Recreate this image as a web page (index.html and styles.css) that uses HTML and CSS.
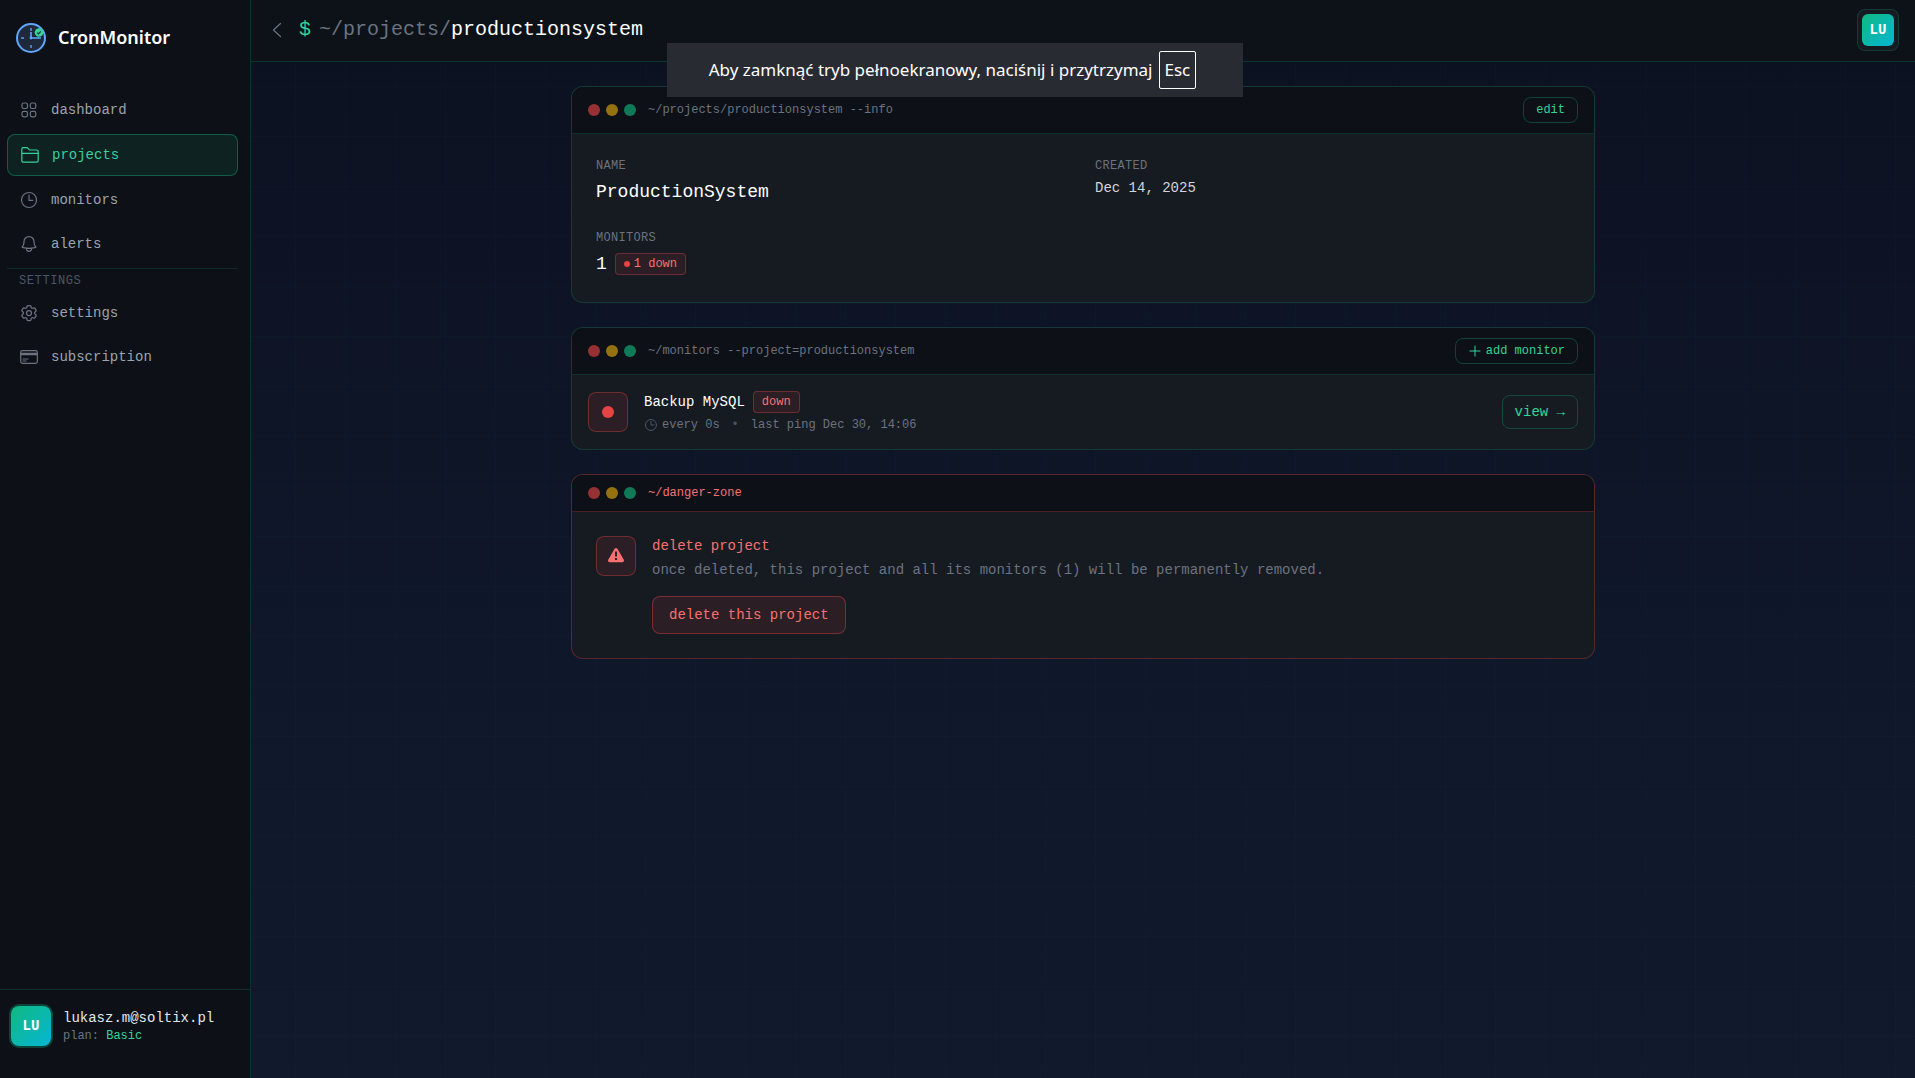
FILE: index.html
```html
<!DOCTYPE html>
<html lang="en">
<head>
<meta charset="utf-8">
<meta name="viewport" content="width=device-width, initial-scale=1">
<title>productionsystem - CronMonitor</title>
<link rel="stylesheet" href="styles.css">
</head>
<body>
<div class="app">
  <aside class="sidebar">
    <a class="brand" href="#">
      <svg class="brand-logo" viewBox="0 0 30 30" aria-hidden="true">
        <circle cx="15" cy="15" r="14" fill="#1e293b" stroke="#60a5fa" stroke-width="2"/>
        <path d="M15 5v3M15 22v3M5 15h3M22 15h3" stroke="#4b7fc4" stroke-width="2"/>
        <path d="M15 9v6h8" fill="none" stroke="#60a5fa" stroke-width="1.6"/>
        <circle cx="15" cy="15" r="1.4" fill="#60a5fa"/>
        <circle cx="23" cy="9.500" r="4.300" fill="#34d399"/>
        <path d="M21.300 9.700l1.200 1.200 2.300-2.600" fill="none" stroke="#1e293b" stroke-width="1.1"/>
      </svg>
      <span>CronMonitor</span>
    </a>
    <nav class="nav">
      <a class="nav-item" href="#">
        <svg class="icon" viewBox="0 0 20 20" aria-hidden="true"><rect x="3" y="3" width="5.500" height="5.500" rx="1.700"/><rect x="11.300" y="3" width="5.500" height="5.500" rx="1.700"/><rect x="3" y="11.300" width="5.500" height="5.500" rx="1.700"/><rect x="11.300" y="11.300" width="5.500" height="5.500" rx="1.700"/></svg>
        dashboard
      </a>
      <a class="nav-item active" href="#" aria-current="page">
        <svg class="icon" viewBox="0 0 20 20" aria-hidden="true"><path d="M1.800 7.800V4.200c0-.900.600-1.500 1.500-1.500h3.300c.600 0 1 .2 1.400.6l1.100 1.300c.3.300.6.400 1 .4h6.500c.900 0 1.600.7 1.600 1.600v9c0 .900-.7 1.600-1.600 1.600H3.400c-.9 0-1.600-.7-1.600-1.600zM1.900 8.300h16.200"/></svg>
        projects
      </a>
      <a class="nav-item" href="#">
        <svg class="icon" viewBox="0 0 20 20" aria-hidden="true"><circle cx="10" cy="10" r="7.500"/><path d="M10 5v5.300h3.800"/></svg>
        monitors
      </a>
      <a class="nav-item" href="#">
        <svg class="icon" viewBox="0 0 24 24" aria-hidden="true"><path d="M14.857 17.082a23.848 23.848 0 0 0 5.454-1.310A8.967 8.967 0 0 1 18 9.750V9A6 6 0 0 0 6 9v.750a8.967 8.967 0 0 1-2.312 6.022c1.733.640 3.560 1.085 5.455 1.310m5.714 0a24.255 24.255 0 0 1-5.714 0m5.714 0a3 3 0 1 1-5.714 0"/></svg>
        alerts
      </a>
      <h2 class="nav-heading">SETTINGS</h2>
      <a class="nav-item" href="#">
        <svg class="icon" viewBox="0 0 24 24" aria-hidden="true"><path d="M9.594 3.940c.090-.542.560-.940 1.110-.940h2.593c.550 0 1.020.398 1.110.940l.213 1.281c.063.374.313.686.645.870.074.040.147.083.220.127.325.196.720.257 1.075.124l1.217-.456a1.125 1.125 0 0 1 1.370.490l1.296 2.247a1.125 1.125 0 0 1-.260 1.431l-1.003.827c-.293.241-.438.613-.430.992a7.723 7.723 0 0 1 0 .255c-.008.378.137.750.430.991l1.004.827c.424.350.534.955.260 1.430l-1.298 2.247a1.125 1.125 0 0 1-1.369.491l-1.217-.456c-.355-.133-.750-.072-1.076.124a6.470 6.470 0 0 1-.220.128c-.331.183-.581.495-.644.869l-.213 1.281c-.090.543-.560.940-1.110.940h-2.594c-.550 0-1.019-.398-1.110-.940l-.213-1.281c-.062-.374-.312-.686-.644-.870a6.520 6.520 0 0 1-.220-.127c-.325-.196-.720-.257-1.076-.124l-1.217.456a1.125 1.125 0 0 1-1.369-.490l-1.297-2.247a1.125 1.125 0 0 1 .260-1.431l1.004-.827c.292-.240.437-.613.430-.991a6.932 6.932 0 0 1 0-.255c.007-.380-.138-.751-.430-.992l-1.004-.827a1.125 1.125 0 0 1-.260-1.430l1.297-2.247a1.125 1.125 0 0 1 1.370-.491l1.216.456c.356.133.751.072 1.076-.124.072-.044.146-.086.220-.128.332-.183.582-.495.644-.869z"/><circle cx="12" cy="12" r="3"/></svg>
        settings
      </a>
      <a class="nav-item" href="#">
        <svg class="icon" viewBox="0 0 20 20" aria-hidden="true"><rect x="1.700" y="3.700" width="16.600" height="12.600" rx="1.700"/><path d="M1.700 6.300h16.600M1.700 7.700h16.600M4 12h5M4 14h3"/></svg>
        subscription
      </a>
    </nav>
    <div class="account">
      <span class="avatar avatar-ring">LU</span>
      <div>
        <p class="account-email">lukasz.m@soltix.pl</p>
        <p class="account-plan">plan: <span>Basic</span></p>
      </div>
    </div>
  </aside>

  <div class="page">
    <header class="topbar">
      <a class="back" href="#" aria-label="Back to projects">
        <svg class="icon" viewBox="0 0 20 20" aria-hidden="true"><path d="M13.500 3.500L6.500 10l7 6.500"/></svg>
      </a>
      <h1 class="path"><span class="prompt">$</span><span class="crumbs">~/projects/<b>productionsystem</b></span></h1>
      <button class="user-menu" type="button"><span class="avatar avatar-small">LU</span></button>
    </header>

    <main class="content">
      <section class="card">
        <header class="card-head">
          <span class="lights"><i></i><i></i><i></i></span>
          <h2 class="card-title">~/projects/productionsystem --info</h2>
          <button class="btn btn-small" type="button">edit</button>
        </header>
        <dl class="info">
          <div><dt>NAME</dt><dd class="large">ProductionSystem</dd></div>
          <div><dt>CREATED</dt><dd>Dec 14, 2025</dd></div>
          <div><dt>MONITORS</dt><dd class="large count">1 <span class="badge"><i class="dot"></i>1 down</span></dd></div>
        </dl>
      </section>

      <section class="card">
        <header class="card-head">
          <span class="lights"><i></i><i></i><i></i></span>
          <h2 class="card-title">~/monitors --project=productionsystem</h2>
          <button class="btn btn-small" type="button"><svg class="icon icon-small" viewBox="0 0 14 14" aria-hidden="true"><path d="M7 2v10M2 7h10"/></svg>add monitor</button>
        </header>
        <div class="monitor">
          <span class="tile"><i class="dot dot-large"></i></span>
          <div class="monitor-text">
            <h3 class="monitor-name">Backup MySQL <span class="badge">down</span></h3>
            <p class="monitor-meta">
              <span class="every"><svg class="icon icon-small" viewBox="0 0 14 14" aria-hidden="true"><circle cx="7" cy="7" r="5.500"/><path d="M7 3.500V7h3"/></svg>every 0s</span>
              <span class="separator">•</span>
              <span>last ping Dec 30, 14:06</span>
            </p>
          </div>
          <a class="btn" href="#">view →</a>
        </div>
      </section>

      <section class="card card-danger">
        <header class="card-head">
          <span class="lights"><i></i><i></i><i></i></span>
          <h2 class="card-title">~/danger-zone</h2>
        </header>
        <div class="danger">
          <span class="tile">
            <svg class="warning" viewBox="0 0 20 20" aria-hidden="true"><path fill="#f87171" d="M8.600 2.700c.6-1.100 2.200-1.100 2.800 0l6.400 11.100c.6 1.100-.2 2.400-1.400 2.400H3.600c-1.200 0-2-1.300-1.400-2.400z"/><path fill="#2d1f26" d="M9 5.500h2v5H9zM9 12h2v2H9z"/></svg>
          </span>
          <div>
            <h3 class="danger-title">delete project</h3>
            <p class="danger-text">once deleted, this project and all its monitors (1) will be permanently removed.</p>
            <button class="btn btn-danger" type="button">delete this project</button>
          </div>
        </div>
      </section>
    </main>
  </div>
</div>
<div class="toast" role="status">Aby zamknąć tryb pełnoekranowy, naciśnij i przytrzymaj <kbd>Esc</kbd></div>
</body>
</html>
```
FILE: styles.css
```css
:root {
  --line: rgba(16, 185, 129, .2);
  --green: #34d399;
  --red: #f87171;
  --ink: #0d1117;
  --panel: #161b22;
  --muted: #6b7280;
}

* { box-sizing: border-box; }
h1, h2, h3, p, dl, dd { margin: 0; font-weight: 400; }
h3 { font-size: 14px; }
a { color: inherit; text-decoration: none; }

body {
  margin: 0;
  color: #fff;
  background: #0f172a;
  font: 14px/20px "Liberation Mono", monospace;
}
button { font: inherit; color: inherit; cursor: pointer; }

.app { display: flex; min-height: 100vh; }

.icon {
  width: 20px;
  height: 20px;
  flex: none;
  fill: none;
  stroke: currentColor;
  stroke-width: 1.2;
  stroke-linecap: round;
  stroke-linejoin: round;
}
.icon-small { width: 14px; height: 14px; stroke-width: 1; }

/* Sidebar */
.sidebar {
  display: flex;
  flex-direction: column;
  flex: 0 0 251px;
  background: var(--ink);
  border-right: 1px solid var(--line);
}
.brand {
  display: flex;
  align-items: center;
  gap: 12px;
  padding: 23px 16px 0;
  font: 600 18px/28px "Noto Sans", sans-serif;
}
.brand span { padding-bottom: 2px; }
.brand-logo { width: 30px; height: 30px; }
.nav {
  display: flex;
  flex-direction: column;
  flex: 1;
  gap: 4px;
  padding: 37px 12px 0 7px;
}
.nav-item {
  display: flex;
  align-items: center;
  gap: 12px;
  padding: 10px 12px;
  color: #9ca3af;
  border-radius: 8px;
}
.nav-item .icon { color: var(--muted); }
.nav-item .icon[viewBox="0 0 24 24"] { stroke-width: 1.5; }
.nav-item.active {
  color: var(--green);
  background: rgba(16, 185, 129, .1);
  border: 1px solid rgba(16, 185, 129, .4);
}
.nav-item.active .icon { color: var(--green); }
.nav-heading {
  padding: 4px 12px 0;
  border-top: 1px solid rgba(16, 185, 129, .15);
  color: #4b5563;
  font-size: 12px;
  line-height: 16px;
  letter-spacing: .05em;
}
.account {
  display: flex;
  align-items: center;
  gap: 12px;
  padding: 16px 11px 32px;
  border-top: 1px solid var(--line);
}
.account-email { color: #e5e7eb; }
.account-plan { color: var(--muted); font-size: 12px; line-height: 16px; }
.account-plan span { color: var(--green); }

.avatar {
  display: grid;
  place-items: center;
  width: 40px;
  height: 40px;
  border-radius: 8px;
  color: #fff;
  background: linear-gradient(135deg, #10b981, #06b6d4);
  font-weight: 700;
}
.avatar-ring { box-shadow: 0 0 0 2px rgba(16, 185, 129, .3); }
.avatar-small { width: 32px; height: 32px; border-radius: 6px; }

/* Page */
.page {
  flex: 1;
  min-width: 0;
  background:
    linear-gradient(rgba(16, 80, 129, .05) 1px, transparent 1px) 44px 36px / 50px 50px,
    linear-gradient(90deg, rgba(16, 80, 129, .05) 1px, transparent 1px) 44px 36px / 50px 50px,
    linear-gradient(#0c1121, #0f172a 60%, #11192d);
}
.topbar {
  display: flex;
  align-items: center;
  gap: 12px;
  padding: 9px 16px 10px;
  background: #0c1218;
  border-bottom: 1px solid var(--line);
}
.back { display: flex; color: var(--muted); }
.path { display: flex; gap: 8px; flex: 1; font-size: 20px; line-height: 28px; }
.prompt { color: var(--green); }
.crumbs { color: var(--muted); }
.crumbs b { color: #fff; font-weight: 400; }
.user-menu {
  padding: 4px;
  background: var(--panel);
  border: 1px solid var(--line);
  border-radius: 8px;
}

.content {
  display: flex;
  flex-direction: column;
  gap: 24px;
  max-width: 1072px;
  margin: 0 auto;
  padding: 24px;
}

/* Cards */
.card {
  overflow: hidden;
  background: var(--panel);
  border: 1px solid var(--line);
  border-radius: 12px;
}
.card-head {
  display: flex;
  align-items: center;
  gap: 12px;
  padding: 10px 16px;
  background: var(--ink);
  border-bottom: 1px solid var(--line);
}
.lights { display: flex; gap: 6px; }
.lights i { width: 12px; height: 12px; border-radius: 50%; background: #963033; }
.lights i:nth-child(2) { background: #93720f; }
.lights i:nth-child(3) { background: #107a58; }
.card-title { flex: 1; color: var(--muted); font-size: 12px; line-height: 16px; }

.btn {
  display: inline-flex;
  align-items: center;
  gap: 4px;
  padding: 6px 12px;
  color: var(--green);
  background: transparent;
  border: 1px solid rgba(16, 185, 129, .3);
  border-radius: 8px;
}
.btn-small { padding: 4px 12px; font-size: 12px; line-height: 16px; }
.btn-danger {
  margin-top: 16px;
  padding: 8px 16px;
  color: var(--red);
  background: rgba(239, 68, 68, .1);
  border-color: rgba(239, 68, 68, .4);
}

.info {
  display: grid;
  grid-template-columns: 1fr 1fr;
  gap: 24px;
  padding: 24px;
}
.info dt {
  margin-bottom: 4px;
  color: var(--muted);
  font-size: 12px;
  line-height: 16px;
  letter-spacing: .025em;
}
.info dd { color: #d1d5db; }
.info .large { color: #fff; font-size: 18px; line-height: 28px; }
.count { display: flex; align-items: center; gap: 8px; }

.badge {
  display: inline-flex;
  align-items: center;
  gap: 4px;
  padding: 2px 8px;
  color: var(--red);
  background: rgba(239, 68, 68, .1);
  border: 1px solid rgba(239, 68, 68, .35);
  border-radius: 4px;
  font-size: 12px;
  line-height: 16px;
}
.dot { width: 6px; height: 6px; border-radius: 50%; background: #e54444; }
.dot-large { width: 12px; height: 12px; }
.tile {
  display: grid;
  place-items: center;
  flex: none;
  width: 40px;
  height: 40px;
  background: rgba(239, 68, 68, .1);
  border: 1px solid rgba(239, 68, 68, .35);
  border-radius: 8px;
}
.warning { width: 20px; height: 20px; }

.monitor { display: flex; align-items: center; gap: 16px; padding: 16px; }
.monitor-text { flex: 1; }
.monitor-name { display: flex; align-items: center; gap: 8px; margin-bottom: 4px; }
.monitor-meta {
  display: flex;
  gap: 12px;
  color: var(--muted);
  font-size: 12px;
  line-height: 16px;
}
.every { display: flex; align-items: center; gap: 4px; }
.every .icon, .separator { color: #4b5563; }

.card-danger { border-color: rgba(239, 68, 68, .3); }
.card-danger .card-head { border-color: rgba(239, 68, 68, .25); }
.card-danger .card-title, .danger-title { color: var(--red); }
.danger { display: flex; gap: 16px; padding: 24px; }
.danger-title { margin-bottom: 4px; }
.danger-text { color: var(--muted); }

/* Fullscreen notice, floats over the page */
.toast {
  position: fixed;
  top: 43px;
  left: 0;
  right: 6px;
  display: flex;
  align-items: center;
  justify-content: center;
  gap: 6px;
  width: 576px;
  height: 54px;
  margin: 0 auto;
  padding-right: 4px;
  background: #292b33;
  font: 17px/36px "Noto Sans", sans-serif;
  white-space: nowrap;
}
.toast kbd { padding: 0 5px; border: 1px solid #fff; border-radius: 2px; font: inherit; }
```
